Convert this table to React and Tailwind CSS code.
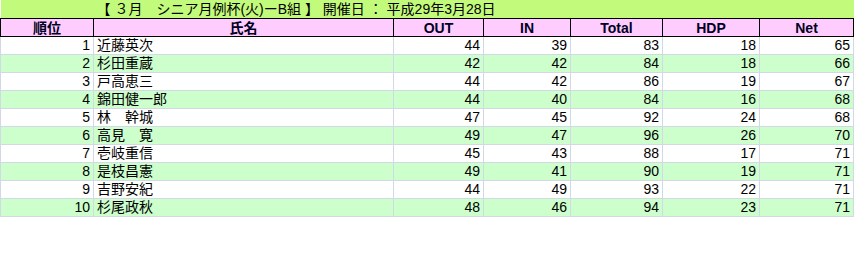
import React from 'react';

const rows = [
  [1, '近藤英次', 44, 39, 83, 18, 65],
  [2, '杉田重蔵', 42, 42, 84, 18, 66],
  [3, '戸高恵三', 44, 42, 86, 19, 67],
  [4, '錦田健一郎', 44, 40, 84, 16, 68],
  [5, '林　幹城', 47, 45, 92, 24, 68],
  [6, '高見　寛', 49, 47, 96, 26, 70],
  [7, '壱岐重信', 45, 43, 88, 17, 71],
  [8, '是枝昌憲', 49, 41, 90, 19, 71],
  [9, '吉野安紀', 44, 49, 93, 22, 71],
  [10, '杉尾政秋', 48, 46, 94, 23, 71],
];

const headers = ['順位', '氏名', 'OUT', 'IN', 'Total', 'HDP', 'Net'];

const App = () => {
  return (
    <div className="w-[855px] h-[253px] bg-white font-['Liberation_Sans','Noto_Sans_CJK_JP',sans-serif] text-[14px] text-black">
      <table className="table-fixed border-collapse w-[853px]">
        <colgroup>
          <col className="w-[93px]" />
          <col className="w-[300px]" />
          <col className="w-[90px]" />
          <col className="w-[87px]" />
          <col className="w-[92px]" />
          <col className="w-[97px]" />
          <col className="w-[94px]" />
        </colgroup>
        <thead>
          <tr className="h-[18px] bg-[#c2fa7c]">
            <td></td>
            <td colSpan={6} className="p-0 pl-[3px] leading-[18px] whitespace-nowrap">
              【 ３月　シニア月例杯(火)ーB組 】 開催日 ： 平成29年3月28日
            </td>
          </tr>
          <tr className="h-[18px] bg-[#ffccff]">
            {headers.map((h) => (
              <th
                key={h}
                className="p-0 border border-black text-center font-bold leading-[16px] text-[#000022]"
              >
                {h}
              </th>
            ))}
          </tr>
        </thead>
        <tbody>
          {rows.map((r, i) => (
            <tr key={r[0]} className={`h-[18px] ${i % 2 === 1 ? 'bg-[#ccffcc]' : 'bg-white'}`}>
              {r.map((v, j) => (
                <td
                  key={j}
                  className={`p-0 border border-[#d2d8e6] leading-[17px] ${
                    j === 1 ? 'text-left pl-[3px]' : 'text-right pr-[3px]'
                  }`}
                >
                  {v}
                </td>
              ))}
            </tr>
          ))}
        </tbody>
      </table>
    </div>
  );
};

export default App;
